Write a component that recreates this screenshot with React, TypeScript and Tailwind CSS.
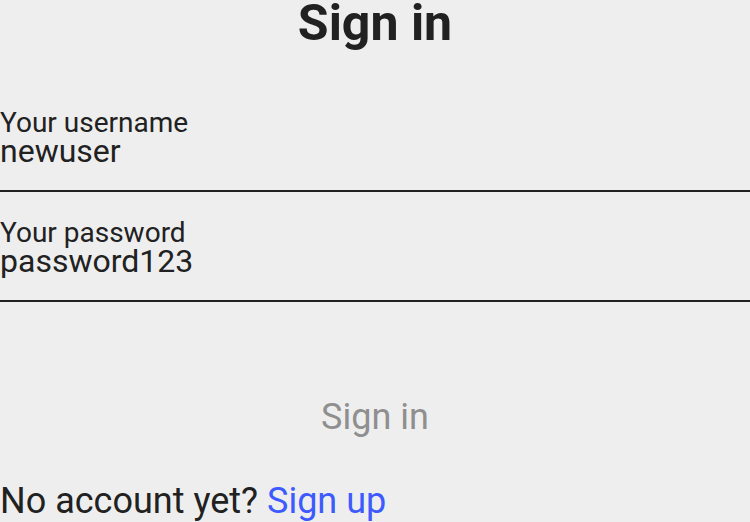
import React from "react";

export default function App() {
  return (
    <div className="w-[750px] h-[522px] overflow-hidden bg-[#eeeeee] text-[#212121]" style={{ fontFamily: "Roboto, 'Noto Sans', sans-serif" }}>
      <h1 className="text-center font-bold text-[50px] leading-[46px]">Sign in</h1>
      <div className="mt-[62px] border-b-2 border-[#212121] pb-[25px]">
        <div className="text-[28px] leading-[29px]">Your username</div>
        <div className="text-[32px] leading-[28px]">newuser</div>
      </div>
      <div className="mt-[26px] border-b-2 border-[#212121] pb-[25px]">
        <div className="text-[28px] leading-[29px]">Your password</div>
        <div className="text-[32px] leading-[28px]">password123</div>
      </div>
      <div className="mt-[95px] text-center text-[36px] leading-[40px] text-[#8f8f8f]">Sign in</div>
      <div className="mt-[44px] text-[36px] leading-[40px] whitespace-nowrap">
        No account yet? <span className="text-[#3d5afe]">Sign up</span>
      </div>
    </div>
  );
}
